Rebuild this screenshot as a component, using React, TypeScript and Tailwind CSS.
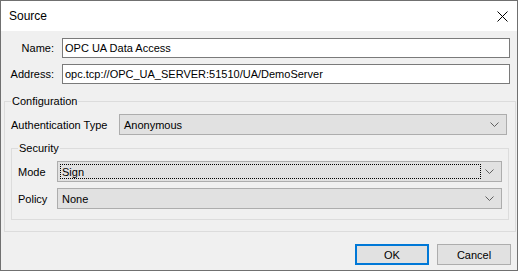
import React from "react";

const Chevron = () => (
  <svg width="9" height="5" viewBox="0 0 9 5" className="shrink-0">
    <path d="M0.5 0.5 L4.5 4.5 L8.5 0.5" fill="none" stroke="#606060" strokeWidth="1" />
  </svg>
);

function Combo({ value, focused, className }: { value: string; focused?: boolean; className?: string }) {
  return (
    <div className={`h-[21px] border border-[#adadad] bg-[#e1e1e1] flex items-center pl-[2px] pr-[3px] ${className ?? ""}`}>
      <div className={`flex-1 h-[15px] flex items-center pl-[1px] ${focused ? "border border-dotted border-black" : "border border-transparent"}`}>
        {value}
      </div>
      <div className="w-[17px] flex justify-center items-center">
        <Chevron />
      </div>
    </div>
  );
}

export default function App() {
  return (
    <div
      className="w-[518px] h-[271px] border border-[#707070] bg-[#f0f0f0] flex flex-col text-[11px] text-black leading-[14px]"
      style={{ fontFamily: '"Liberation Sans", Arial, sans-serif' }}
    >
      <div className="h-[30px] bg-white flex items-center justify-between pl-[8px] pr-[9px] shrink-0">
        <span className="text-[12px]">Source</span>
        <svg width="11" height="11" viewBox="0 0 11 11">
          <path d="M0.5 0.5 L10.5 10.5 M10.5 0.5 L0.5 10.5" stroke="#000" strokeWidth="1" />
        </svg>
      </div>
      <div className="flex flex-col px-[3px]">
        <div className="flex items-center mt-[7px]">
          <div className="w-[50px] text-right pr-[0px]">Name:</div>
          <div className="ml-[8px] h-[20px] w-[448px] border border-[#7a7a7a] bg-white flex items-center pl-[2px]">
            OPC UA Data Access
          </div>
        </div>
        <div className="flex items-center mt-[6px]">
          <div className="w-[50px] text-right">Address:</div>
          <div className="ml-[8px] h-[20px] w-[448px] border border-[#7a7a7a] bg-white flex items-center pl-[2px]">
            opc.tcp://OPC_UA_SERVER:51510/UA/DemoServer
          </div>
        </div>
        <fieldset className="mt-[10px] w-[510px] border border-[#dcdcdc] px-[6px] pb-[11px]">
          <legend className="px-[1px] leading-[14px]">Configuration</legend>
          <div className="flex items-center mt-[6px]">
            <div className="w-[108px]">Authentication Type</div>
            <Combo value="Anonymous" className="w-[388px]" />
          </div>
          <fieldset className="mt-[6px] w-[497px] border border-[#dcdcdc] px-[6px] pb-[10px]">
            <legend className="px-[1px] leading-[14px]">Security</legend>
            <div className="flex items-center mt-[6px]">
              <div className="w-[39px]">Mode</div>
              <Combo value="Sign" focused className="w-[445px]" />
            </div>
            <div className="flex items-center mt-[6px]">
              <div className="w-[39px]">Policy</div>
              <Combo value="None" className="w-[445px]" />
            </div>
          </fieldset>
        </fieldset>
        <div className="flex justify-end gap-[8px] mt-[12px] pr-[3px]">
          <button className="w-[74px] h-[21px] border-2 border-[#0078d7] bg-[#e1e1e1] flex items-center justify-center">
            OK
          </button>
          <button className="w-[74px] h-[21px] border border-[#adadad] bg-[#e1e1e1] flex items-center justify-center">
            Cancel
          </button>
        </div>
      </div>
    </div>
  );
}
